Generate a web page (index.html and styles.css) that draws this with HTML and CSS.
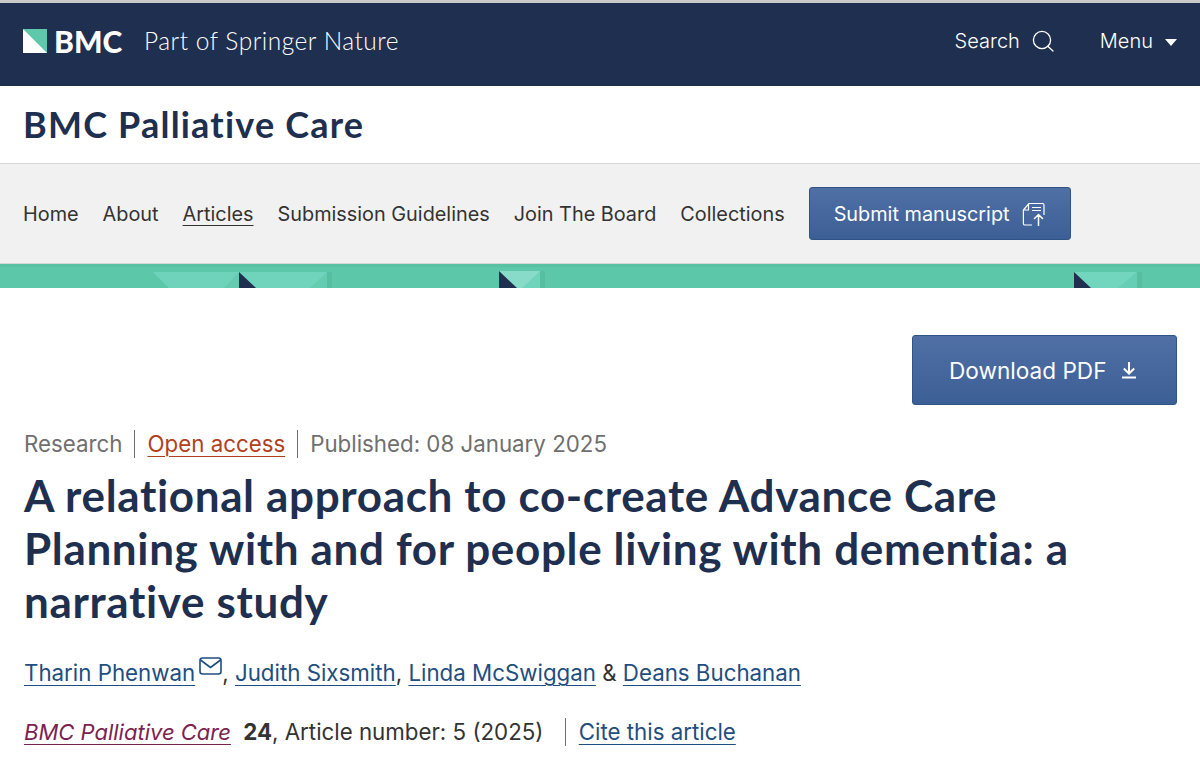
FILE: index.html
```html
<!DOCTYPE html>
<html lang="en">
<head>
    <meta charset="UTF-8">
    <meta name="viewport" content="width=device-width, initial-scale=1.0">
    <title>A relational approach to co-create Advance Care Planning</title>
    <link rel="stylesheet" href="styles.css">
</head>
<body>
    <header class="top-bar">
        <div class="brand">
            <svg class="brand-mark" width="24" height="24" viewBox="0 0 24 24">
                <rect width="24" height="24" fill="#fff"/>
                <path d="M0 0H24V24Z" fill="#5dc8aa"/>
            </svg>
            <span class="brand-name">BMC</span>
            <span class="brand-tag">Part of Springer Nature</span>
        </div>
        <div class="top-actions">
            <a class="top-link">Search
                <svg width="22" height="22" viewBox="0 0 22 22" fill="none" stroke="#fff" stroke-width="1.3">
                    <circle cx="10" cy="10" r="8.6"/>
                    <path d="M15.8 16.2 21 21" stroke-linecap="round"/>
                </svg>
            </a>
            <a class="top-link">Menu <span class="caret"></span></a>
        </div>
    </header>

    <div class="journal-title">BMC Palliative Care</div>

    <nav class="journal-nav">
        <a>Home</a>
        <a>About</a>
        <a class="current">Articles</a>
        <a>Submission Guidelines</a>
        <a>Join The Board</a>
        <a>Collections</a>
        <a class="btn btn-submit">Submit manuscript
            <svg width="24" height="24" viewBox="0 0 24 24" fill="none" stroke="#fff" stroke-width="1.2" stroke-linejoin="round">
                <path d="M10 23H3a1.6 1.6 0 0 1-1.6-1.6V8L7 1.5h13.5A1.6 1.6 0 0 1 22 3.1V13"/>
                <path d="M1.6 8H6.5V2M10 5.5h9M10 8.5h9"/>
                <path d="M16.5 23.5V12.5M12.5 16.5l4-4 4 4" stroke-width="1.5" stroke-linecap="round"/>
            </svg>
        </a>
    </nav>

    <svg class="banner" width="1200" height="24" viewBox="0 0 1200 24">
        <rect width="1200" height="24" fill="#5cc7a9"/>
        <rect width="1200" height="3" fill="#58c0a3"/>
        <!-- folds, left to right -->
        <rect x="327" y="8" width="5" height="16" fill="#57bea1"/>
        <path d="M153 8H239V24H169Z" fill="#6fd3bc"/>
        <path d="M239 8 224 24H239Z" fill="#62cbb0"/>
        <path d="M239 8H327V24H239Z" fill="#70d4bd"/>
        <path d="M327 8 310 24H327Z" fill="#63ccb1"/>
        <path d="M239 8 256 24H239Z" fill="#1f2f4f"/>
        <rect x="540" y="7" width="5" height="17" fill="#57bea1"/>
        <path d="M499 7H540V24H499Z" fill="#88dbc9"/>
        <path d="M540 7 522 24H540Z" fill="#70d4bd"/>
        <path d="M499 7 517 24H499Z" fill="#1f2f4f"/>
        <rect x="1137" y="8" width="5" height="16" fill="#57bea1"/>
        <path d="M1074 8H1137V24H1074Z" fill="#72d5be"/>
        <path d="M1137 8 1118 24H1137Z" fill="#66ceb4"/>
        <path d="M1074 8 1091 24H1074Z" fill="#1f2f4f"/>
    </svg>

    <main class="article">
        <div class="download-row">
            <a class="btn btn-download">Download PDF
                <svg width="16" height="18" viewBox="0 0 16 18" fill="none" stroke="#fff" stroke-width="2">
                    <path d="M8 1v11M2.8 7.5 8 12.5l5.2-5M1 16.5h14"/>
                </svg>
            </a>
        </div>

        <ul class="meta">
            <li>Research</li>
            <li><a class="open-access">Open access</a></li>
            <li>Published: 08 January 2025</li>
        </ul>

        <h1>A relational approach to co-create Advance Care Planning with and for people living with dementia: a narrative study</h1>

        <p class="authors">
            <a>Tharin Phenwan</a><svg class="mail" width="23" height="18" viewBox="0 0 23 18" fill="none" stroke="#1f4e80" stroke-width="1.6" stroke-linejoin="round"><rect x="1" y="1" width="21" height="16" rx="2.5"/><path d="M1.5 3 11.5 10.5 21.5 3"/></svg>, <a>Judith Sixsmith</a>, <a>Linda McSwiggan</a> &amp; <a>Deans Buchanan</a>
        </p>

        <p class="citation">
            <a class="journal-link">BMC Palliative Care</a>
            <b>24</b>, Article number: 5 (2025)
            <span class="cite-wrap"><a class="cite-link">Cite this article</a></span>
        </p>
    </main>
</body>
</html>
```

FILE: styles.css
```css
* {
    box-sizing: border-box;
}
body {
    margin: 0;
    height: 758px;
    overflow: hidden;
    font-family: Inter, sans-serif;
    background-color: #fff;
    color: #222;
}
a {
    color: inherit;
}
.top-bar {
    height: 86px;
    border-top: 3px solid #c9c9c9;
    background-color: #1f2f4f;
    color: #fff;
    display: flex;
    justify-content: space-between;
    align-items: center;
    padding: 0 23px 8px 23px;
}
.brand {
    display: flex;
    align-items: center;
}
.brand-mark {
    display: block;
}
.brand-name {
    font-family: Lato, sans-serif;
    font-weight: 900;
    font-size: 30px;
    line-height: 32px;
    margin-left: 7px;
    width: 90px;
}
.brand-tag {
    font-family: Lato, sans-serif;
    font-weight: 300;
    font-size: 24.5px;
    letter-spacing: 0.5px;
}
.top-actions {
    display: flex;
    align-items: center;
    gap: 46px;
}
.top-link {
    display: flex;
    align-items: center;
    gap: 12px;
    font-size: 20px;
    font-weight: 300;
}
.caret {
    width: 0;
    height: 0;
    border-left: 6px solid transparent;
    border-right: 6px solid transparent;
    border-top: 7px solid #fff;
    margin-top: 3px;
}
.journal-title {
    height: 77px;
    padding: 0 23px 2px 23px;
    display: flex;
    align-items: center;
    font-family: Lato, sans-serif;
    font-weight: 700;
    font-size: 36px;
    letter-spacing: 1.2px;
    color: #1f2f4f;
}
.journal-nav {
    height: 101px;
    background-color: #f1f1f1;
    border-top: 1px solid #d6d6d6;
    border-bottom: 1px solid #d6d6d6;
    display: flex;
    align-items: center;
    gap: 24px;
    padding-left: 23px;
    font-size: 19.85px;
    color: #333;
}
.journal-nav a {
    text-decoration: none;
}
.journal-nav .current {
    text-decoration: underline;
    text-underline-offset: 4px;
    text-decoration-thickness: 1px;
}
.btn {
    display: flex;
    align-items: center;
    color: #fff;
    background: linear-gradient(#5070a5, #3c5f96);
    border: 1px solid #2f5488;
    border-radius: 3px;
}
.journal-nav .btn-submit {
    color: #fff;
    height: 53px;
    width: 262px;
    padding-left: 24px;
    gap: 12px;
}
.banner {
    display: block;
}
.article {
    padding: 47px 23px 0 24px;
}
.download-row {
    display: flex;
    justify-content: flex-end;
}
.btn-download {
    width: 265px;
    height: 70px;
    padding-left: 36px;
    gap: 15px;
    font-size: 22.6px;
}
.meta {
    list-style: none;
    margin: 25px 0 0 0;
    padding: 0;
    display: flex;
    font-size: 22.3px;
    line-height: 28px;
    color: #6f6f6f;
}
.meta li + li {
    border-left: 1px solid #6f6f6f;
    margin-left: 12px;
    padding-left: 12px;
}
.open-access {
    color: #b1401d;
    text-decoration: underline;
    text-underline-offset: 4px;
    text-decoration-thickness: 1px;
}
h1 {
    margin: 11px 0 0 0;
    font-family: Lato, sans-serif;
    font-weight: 700;
    font-size: 44px;
    line-height: 53px;
    letter-spacing: 0.65px;
    color: #1f2f4f;
    max-width: 1070px;
}
.authors {
    margin: 29px 0 0 0;
    font-size: 22.3px;
    line-height: 30px;
    color: #333;
}
.authors a {
    color: #1f4e80;
    text-decoration: underline;
    text-underline-offset: 4px;
    text-decoration-thickness: 1px;
}
.mail {
    margin-left: 4px;
    vertical-align: 6px;
}
.citation {
    margin: 29px 0 0 0;
    font-size: 22.3px;
    line-height: 30px;
    color: #333;
}
.journal-link {
    color: #7b2350;
    font-size: 22px;
    font-style: italic;
    text-decoration: underline;
    text-underline-offset: 4px;
    text-decoration-thickness: 1px;
    margin-right: 6px;
}
.cite-wrap {
    display: inline-block;
    border-left: 1px solid #6f6f6f;
    margin-left: 15px;
    padding-left: 13px;
    line-height: 28px;
}
.cite-link {
    color: #1f4e80;
    text-decoration: underline;
    text-underline-offset: 4px;
    text-decoration-thickness: 1px;
}
```
